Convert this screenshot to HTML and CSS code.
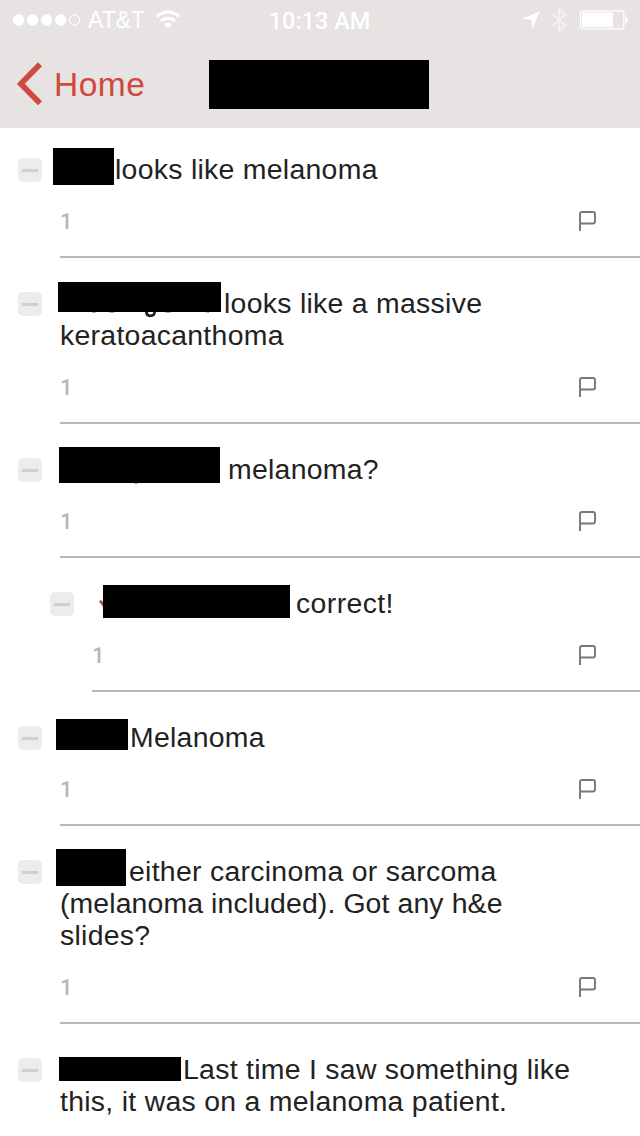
FILE: index.html
```html
<!DOCTYPE html>
<html lang="en">
<head>
<meta charset="utf-8">
<title>Comments</title>
<link rel="stylesheet" href="styles.css">
</head>
<body>
<svg class="defs" width="0" height="0">
  <symbol id="flag" viewBox="0 0 17 20"><path d="M1 20V3Q1 1 3 1H14Q16 1 16 3V10.5Q16 12.5 14 12.5H1" fill="none" stroke="#77777a" stroke-width="1.9"/></symbol>
</svg>
<header class="header">
  <div class="status">
    <div class="carrier">
      <svg class="signal" width="68" height="14" viewBox="0 0 68 14" fill="#fff"><circle cx="5.6" cy="7" r="5.7"/><circle cx="19.6" cy="7" r="5.7"/><circle cx="33.6" cy="7" r="5.7"/><circle cx="47.6" cy="7" r="5.7"/><circle cx="61.6" cy="7" r="5.1" fill="none" stroke="#fff" stroke-width="1.1"/></svg>
      <span class="network">AT&amp;T</span>
      <svg class="wifi" width="26" height="20" viewBox="0 0 26 20" fill="none" stroke="#fff" stroke-width="3"><path d="M1.5 6.6Q13-2.7 24.5 6.6"/><path d="M5.8 11Q13 5.2 20.2 11"/><path d="M8.8 14Q13 10.8 17.2 14L13 18.2Z" fill="#fff" stroke="none"/></svg>
    </div>
    <div class="time">10:13 AM</div>
    <div class="indicators">
      <svg width="20" height="20" viewBox="0 0 20 20"><path d="M19 1L11 19L10.3 9.8L1 9Z" fill="#fff"/></svg>
      <svg class="bluetooth" width="16" height="26" viewBox="0 0 16 26" fill="none" stroke="#fff" stroke-width="2"><path d="M1.5 7L14 18.2L8 23.8V2L14 7.5L1.5 19"/></svg>
      <svg class="battery" width="50" height="20" viewBox="0 0 50 20"><rect x="1.5" y=".8" width="43.3" height="18" rx="1.5" fill="none" stroke="#fff" stroke-width="1.3"/><rect x="3.2" y="2.5" width="30.8" height="14.6" fill="#fff"/><path d="M46.2 6.3Q49 7 49 9.8T46.2 13.3Z" fill="#fff"/></svg>
    </div>
  </div>
  <nav class="nav">
    <a class="back"><svg width="26" height="44" viewBox="0 0 26 44"><path d="M23 2.2L3.8 21.8L23 41.2" fill="none" stroke="#cf4a3c" stroke-width="5.6"/></svg><span>Home</span></a>
    <div class="title-block"></div>
  </nav>
</header>
<main class="comments">
  <article class="comment c1">
    <span class="toggle"></span>
    <div class="body"><p class="text"><span class="mask"></span>looks like melanoma</p>
    <div class="meta"><span>1</span><svg class="flag"><use href="#flag"/></svg></div></div>
  </article>
  <article class="comment c2">
    <span class="toggle"></span>
    <div class="body"><p class="text"><span class="mask"></span><svg class="trace" width="126" height="7" viewBox="0 0 126 7"><path d="M2 0H8L5 .6ZM19 0H26L23 .6ZM75 0H83L79 .6ZM116 0H120V.5Z" fill="#222"/><path d="M56 0H59Q59 2.6 61.2 2.6Q64 2.6 64.5 0H67Q66.8 5.2 61 5.2Q56 5 56 0Z" fill="#222"/></svg>looks like a massive<br>keratoacanthoma</p>
    <div class="meta"><span>1</span><svg class="flag"><use href="#flag"/></svg></div></div>
  </article>
  <article class="comment c3">
    <span class="toggle"></span>
    <div class="body"><p class="text"><span class="mask"></span><svg class="trace" width="6" height="2" viewBox="0 0 6 2"><path d="M1 0H5Q3 1.2 1 0" fill="#444"/></svg>melanoma?</p>
    <div class="meta"><span>1</span><svg class="flag"><use href="#flag"/></svg></div></div>
  </article>
  <article class="comment nested c4">
    <span class="toggle"></span>
    <div class="body"><p class="text"><svg class="trace" width="5" height="9" viewBox="0 0 5 9"><path d="M0 1.5L2 0L5 3V8Z" fill="#b94a32"/></svg><span class="mask"></span>correct!</p>
    <div class="meta"><span>1</span><svg class="flag"><use href="#flag"/></svg></div></div>
  </article>
  <article class="comment c5">
    <span class="toggle"></span>
    <div class="body"><p class="text"><span class="mask"></span>Melanoma</p>
    <div class="meta"><span>1</span><svg class="flag"><use href="#flag"/></svg></div></div>
  </article>
  <article class="comment c6">
    <span class="toggle"></span>
    <div class="body"><p class="text"><span class="mask"></span>either carcinoma or sarcoma<br><span class="tight">(melanoma included). Got any h&amp;e</span><br>slides?</p>
    <div class="meta"><span>1</span><svg class="flag"><use href="#flag"/></svg></div></div>
  </article>
  <article class="comment c7">
    <span class="toggle"></span>
    <div class="body"><p class="text"><span class="mask"></span>Last time I saw something like<br>this, it was on a melanoma patient.</p></div>
  </article>
</main>
</body>
</html>
```
FILE: styles.css
```css
* { box-sizing: border-box; }
body {
  margin: 0;
  height: 1136px;
  overflow: hidden;
  background: #fff;
  color: #222;
  font-family: "Liberation Sans", Arial, sans-serif;
}
svg { display: block; flex: none; }
.defs { position: absolute; }

.header { height: 128px; background: #e6e3e2; }
.status {
  display: grid;
  grid-template-columns: 1fr auto 1fr;
  height: 40px;
  padding: 0 11px 0 13px;
  align-items: center;
  color: #fff;
  font-size: 23px;
}
.carrier { display: flex; align-items: center; }
.network { margin-left: 7px; padding-top: 1px; }
.wifi { margin-left: 10px; }
.time {
  margin-left: -3px;
  padding-top: 1px;
  font-family: Roboto, sans-serif;
  font-weight: 500;
  font-size: 23.5px;
}
.indicators { display: flex; align-items: center; justify-content: flex-end; }
.bluetooth { margin-left: 10px; opacity: .5; }
.battery { margin-left: 12px; }
.nav {
  display: grid;
  grid-template-columns: 209px 220px;
  height: 88px;
  align-items: center;
}
.back {
  display: flex;
  align-items: center;
  padding-left: 17px;
  color: #cf4a3c;
  font-size: 33.5px;
  letter-spacing: .5px;
}
.back span { margin-left: 11px; padding-top: 2px; }
.title-block { height: 49px; background: #000; }

.comments { margin-top: -4px; }
.comment { display: flex; padding-left: 18px; }
.nested { padding-left: 50px; }
.toggle {
  display: grid;
  place-items: center;
  flex: none;
  width: 24px;
  height: 24px;
  margin: 34px 18px 0 0;
  border-radius: 5px;
  background: #ececec;
}
.toggle::before {
  content: "";
  width: 16px;
  height: 3px;
  background: #cfcfcf;
}
.body { flex: 1; padding-top: 28px; border-bottom: 2px solid #b7b7b7; }
.comment:last-child .body { border-bottom: 0; }
.text {
  position: relative;
  margin: 0;
  padding-top: 1px;
  font-size: 28.4px;
  line-height: 32px;
  letter-spacing: .29px;
  white-space: nowrap;
}
.tight { letter-spacing: .12px; }
.meta {
  display: flex;
  justify-content: space-between;
  align-items: center;
  height: 71px;
  padding-right: 44px;
  color: #b7b7b7;
  font-family: Roboto, sans-serif;
  font-weight: 500;
  font-size: 22px;
}
.meta span { padding-top: 2px; }
.flag { width: 17px; height: 20px; margin-top: 1px; }

/* Hidden user names cover the start of each comment. */
.mask { position: absolute; background: #000; }
.trace { position: absolute; }
.c1 .text { text-indent: 55px; }
.c1 .mask { left: -7px; top: -4px; width: 61px; height: 37px; }
.c2 .text { text-indent: 164px; }
.c2 .mask { left: -2px; top: -4px; width: 163px; height: 30px; }
.c2 .trace { left: 29px; top: 26px; }
.c3 .text { text-indent: 168px; }
.c3 .mask { left: -1px; top: -5px; width: 161px; height: 36px; }
.c3 .trace { left: 73px; top: 31px; }
.c4 .text { text-indent: 204px; letter-spacing: .4px; }
.c4 .mask { left: 11px; top: -1px; width: 187px; height: 33px; }
.c4 .trace { left: 7px; top: 14px; }
.c5 .text { text-indent: 70px; }
.c5 .mask { left: -4px; top: -1px; width: 72px; height: 31px; }
.c6 .text { text-indent: 69px; }
.c6 .mask { left: -4px; top: -5px; width: 70px; height: 37px; }
.c7 .text { text-indent: 123px; }
.c7 .mask { left: -1px; top: 5px; width: 122px; height: 24px; }
```
